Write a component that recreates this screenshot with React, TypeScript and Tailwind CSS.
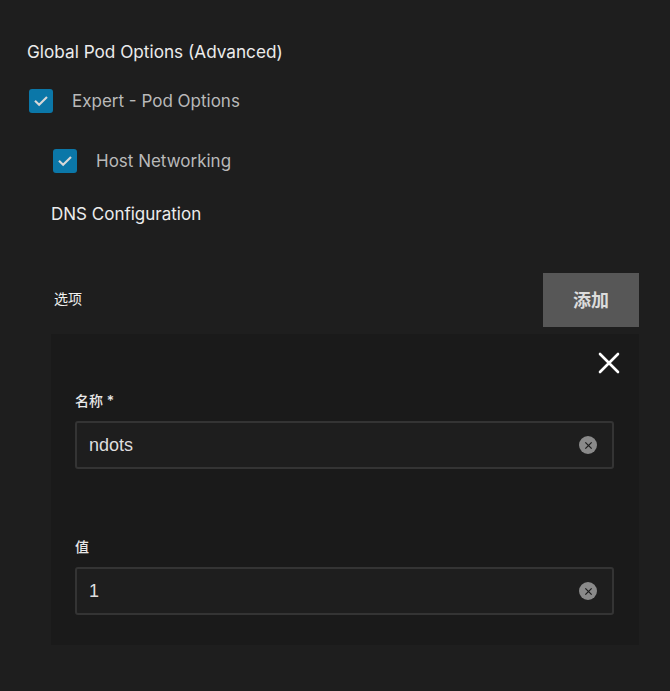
import React from "react";

function Check() {
  return (
    <span className="flex h-6 w-6 items-center justify-center rounded-[3px] bg-[#0b77a8]">
      <svg viewBox="0 0 24 24" className="h-[18px] w-[18px]" fill="none" stroke="#d8d8d8" strokeWidth="2.8" strokeLinecap="square">
        <path d="M5 12.5l4.5 4.5L19 7.5" />
      </svg>
    </span>
  );
}

function ClearIcon() {
  return (
    <span className="flex h-[18px] w-[18px] items-center justify-center rounded-full bg-[#8a8a8a]">
      <svg viewBox="0 0 10 10" className="h-[9px] w-[9px]" stroke="#1e1e1e" strokeWidth="1.4">
        <path d="M1.5 1.5l7 7M8.5 1.5l-7 7" />
      </svg>
    </span>
  );
}

function Field({ label, value }: { label: string; value: string }) {
  return (
    <div className="flex flex-col">
      <div className="h-[20px] text-[14px] leading-[20px] text-[#e8e8e8] font-['Inter','Noto_Sans_CJK_SC',sans-serif] font-medium">
        {label}
      </div>
      <div className="mt-[10px] flex h-[48px] items-center justify-between rounded-[3px] border-2 border-[#343434] bg-[#1e1e1e] pl-[12px] pr-[15px]">
        <span className="text-[18px] text-[#dedede] font-['Liberation_Sans',sans-serif]">{value}</span>
        <ClearIcon />
      </div>
    </div>
  );
}

export default function App() {
  return (
    <div className="min-h-[691px] w-full bg-[#1e1e1e] pl-[27px] pr-[31px] pt-[40px] font-['Inter','Noto_Sans_CJK_SC',sans-serif]">
      <h2 className="h-[24px] text-[17.2px] leading-[24px] text-[#ececec]">Global Pod Options (Advanced)</h2>
      <label className="mt-[25px] flex items-center gap-[19px] pl-[2px]">
        <Check />
        <span className="text-[17px] leading-[24px] text-[#b9b9b9]">Expert - Pod Options</span>
      </label>
      <label className="mt-[36px] flex items-center gap-[19px] pl-[26px]">
        <Check />
        <span className="text-[17px] leading-[24px] text-[#b9b9b9]">Host Networking</span>
      </label>
      <h3 className="mt-[29px] h-[24px] pl-[24px] text-[17px] leading-[24px] text-[#ececec]">DNS Configuration</h3>

      <div className="ml-[24px] mt-[47px]">
        <div className="flex items-center justify-between">
          <span className="-mt-[4px] pl-[3px] text-[14px] text-[#f0f0f0]">选项</span>
          <button className="flex h-[54px] w-[96px] items-center justify-center bg-[#575757] text-[18px] font-bold text-[#dcdcdc]">
            添加
          </button>
        </div>
        <div className="mt-[7px] bg-[#1a1a1a] pb-[30px] pl-[24px] pr-[25px] pt-[18px]">
          <div className="-mr-[6px] flex justify-end">
            <svg viewBox="0 0 22 22" className="h-[22px] w-[22px]" stroke="#ffffff" strokeWidth="2.6" strokeLinecap="round">
              <path d="M2 2l18 18M20 2L2 20" />
            </svg>
          </div>
          <div className="mt-[17px]">
            <Field label="名称 *" value="ndots" />
          </div>
          <div className="mt-[68px]">
            <Field label="值" value="1" />
          </div>
        </div>
      </div>
    </div>
  );
}
